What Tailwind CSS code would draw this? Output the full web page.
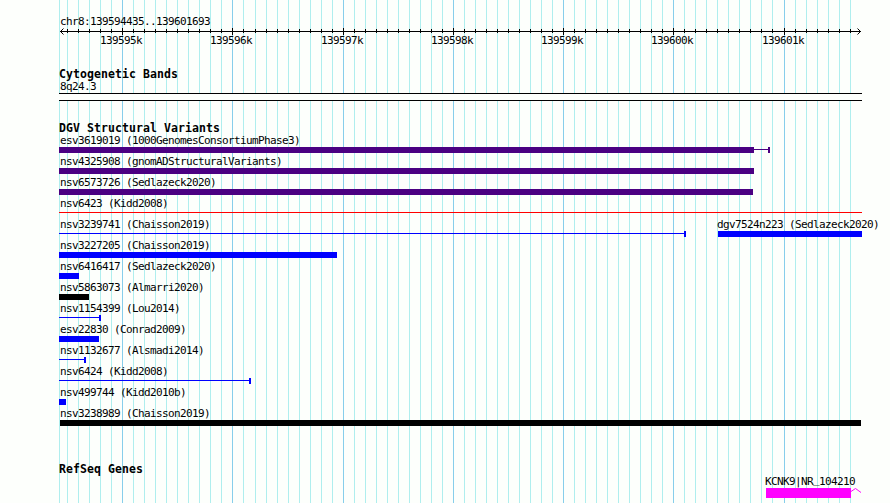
<!DOCTYPE html>
<html lang="en">
<head>
<meta charset="utf-8">
<title>chr8:139594435..139601693</title>
<script src="https://cdn.jsdelivr.net/npm/@tailwindcss/browser@4"></script>
</head>
<body class="bg-[#fdfffc]">
<main class="relative isolate w-[890px] h-[503px] overflow-hidden bg-[#fdfffc] text-black font-['DejaVu_Sans_Mono',monospace] text-[11px] leading-[13px] tracking-[-0.62px] whitespace-nowrap">
  <svg class="absolute inset-0 -z-10" width="890" height="503" shape-rendering="crispEdges" aria-hidden="true">
    <path id="minor" stroke="#afeeee" fill="none"/>
    <path id="major" stroke="#87ceeb" fill="none"/>
  </svg>

  <header class="flex flex-col h-[68px] pt-[15px]">
    <div class="pl-[60px] h-[13px]">chr8:139594435..139601693</div>
    <svg width="890" height="39" class="block shrink-0 -mt-[3px]" viewBox="0 25 890 39">
      <g shape-rendering="crispEdges" stroke="#000" fill="none">
        <path d="M60 31.5H861"/>
        <path id="ticks"/>
      </g>
      <path d="M63.5 28.5L60.5 31.5L63.5 34.5M857.5 28.5L860.5 31.5L857.5 34.5" stroke="#000" fill="none"/>
      <g id="labels" fill="#000"></g>
    </svg>
  </header>

  <section class="h-[54px]">
    <h2 class="pl-[59px] h-[13px] text-[11.5px] leading-[13px] font-bold tracking-[0.08px]">Cytogenetic Bands</h2>
    <div class="pl-[60px] h-[13px] -mt-px">8q24.3</div>
    <div class="ml-[59px] w-[803px] h-[8px] border-y border-black bg-[#fdfffc]"></div>
  </section>

  <section class="h-[341px]">
    <h2 class="pl-[59px] h-[10px] text-[11.5px] leading-[13px] font-bold tracking-[0.08px]">DGV Structural Variants</h2>
    <div id="tracks" class="flex flex-col"></div>
  </section>

  <section>
    <h2 class="pl-[59px] h-[13px] text-[11.5px] leading-[13px] font-bold tracking-[0.08px]">RefSeq Genes</h2>
    <div class="pl-[765px] h-[14px] -mt-[2px]">KCNK9|NR<span class="align-[2px] leading-none">_</span>104210</div>
    <div class="flex pl-[766px]">
      <div class="w-[85px] h-[10px] bg-[#ff00ff]"></div>
      <svg width="11" height="10" fill="none" stroke="#ff00ff"><path d="M0 3.5L4.5 .5L10 4.5"/></svg>
    </div>
  </section>
</main>
<script>
  const gridX = i => 122 + 11 * i + (i >= 12) + (i >= 60);
  let minor = 'M59.5 0V503', major = '', ticks = '', labels = '';
  for (let i = -5; i <= 66; i++) {
    const x = gridX(i) + 0.5;
    if (i % 10 === 0) {
      major += `M${x} 0V503`;
      ticks += `M${x} 28V35`;
      labels += `<text x="${x - 22.5}" y="44">${139595 + i / 10}k</text>`;
    } else {
      minor += `M${x} 0V503`;
      ticks += `M${x} 29V33`;
    }
  }
  document.getElementById('minor').setAttribute('d', minor);
  document.getElementById('major').setAttribute('d', major);
  document.getElementById('ticks').setAttribute('d', ticks);
  document.getElementById('labels').innerHTML = labels;

  const purple = 'bg-[#4b0082]', blue = 'bg-[#0000ff]', black = 'bg-black', red = 'bg-[#ff0000]';
  // label, colour, solid bar end, thin line end, end cap, start
  const rows = [
    ['esv3619019 (1000GenomesConsortiumPhase3)', purple, 754, 768, 1],
    ['nsv4325908 (gnomADStructuralVariants)', purple, 754],
    ['nsv6573726 (Sedlazeck2020)', purple, 753],
    ['nsv6423 (Kidd2008)', red, 59, 862],
    ['nsv3239741 (Chaisson2019)', blue, 59, 684, 1],
    ['nsv3227205 (Chaisson2019)', blue, 337],
    ['nsv6416417 (Sedlazeck2020)', blue, 79],
    ['nsv5863073 (Almarri2020)', black, 89],
    ['nsv1154399 (Lou2014)', blue, 59, 99, 1],
    ['esv22830 (Conrad2009)', blue, 99],
    ['nsv1132677 (Alsmadi2014)', blue, 59, 84, 1],
    ['nsv6424 (Kidd2008)', blue, 59, 249, 1],
    ['nsv499744 (Kidd2010b)', blue, 66],
    ['nsv3238989 (Chaisson2019)', black, 861, 0, 0, 60]
  ];
  document.getElementById('tracks').innerHTML = rows.map(([name, c, end, line, cap, start = 59], n) => {
    const second = n === 4;
    return `<div class="h-[21px]"><div class="flex h-[15px] pt-[2px] pl-[60px]"><span class="w-[657px]">${name}</span>${second ? '<span>dgv7524n223 (Sedlazeck2020)</span>' : ''}</div>` +
      `<div class="flex h-[6px]"><div style="width:${start}px"></div><div class="h-[6px] ${c}" style="width:${end - start}px"></div>` +
      (line ? `<div class="h-px mt-[2px] ${c}" style="width:${line - end}px"></div>` : '') +
      (cap ? `<div class="w-[2px] h-[6px] ${c}"></div>` : '') +
      (second ? `<div class="w-[144px] h-[6px] ml-[32px] ${blue}"></div>` : '') + `</div></div>`;
  }).join('');
</script>
</body>
</html>
